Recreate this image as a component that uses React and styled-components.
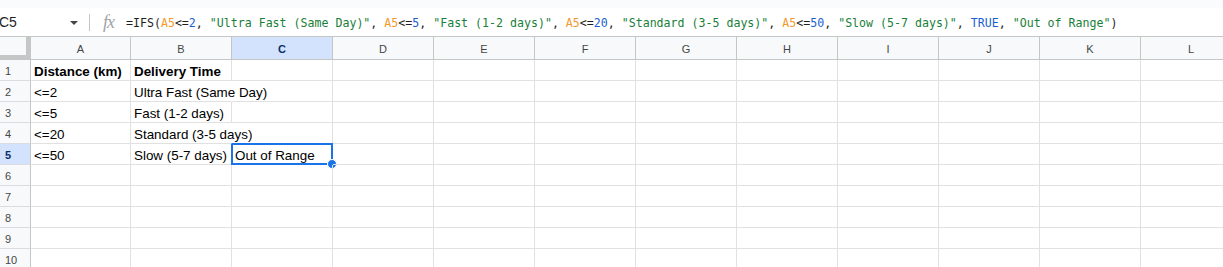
import React from 'react';
import styled, { createGlobalStyle } from 'styled-components';

const GlobalStyle = createGlobalStyle`
  html, body {
    margin: 0;
    padding: 0;
    background: #ffffff;
  }
  body {
    font-family: 'Liberation Sans', Arial, sans-serif;
  }
`

// top of the page
const Page = styled.div`
  width: 1223px;
  height: 267px;
  overflow: hidden;
  background: #ffffff;
`

const TopStrip = styled.div`
  height: 8px;
  background: #f9fbfd;
`

// formula bar
const FormulaBar = styled.div`
  height: 28px;
  border-bottom: 1px solid #c4c7c5;
  display: flex;
  align-items: center;
  background: #ffffff;
`

const NameBox = styled.div`
  width: 90px;
  height: 100%;
  display: flex;
  align-items: center;
  box-sizing: border-box;
  padding-right: 11px;
  font-size: 14px;
  color: #1f1f1f;
  margin-left: -1px;
`

const NameText = styled.span`
  flex-grow: 1;
`

const Caret = styled.span`
  width: 0;
  height: 0;
  border-left: 4px solid transparent;
  border-right: 4px solid transparent;
  border-top: 4px solid #444746;
  margin-top: 1px;
`

const Divider = styled.div`
  width: 1px;
  height: 17px;
  background: #c4c7c5;
`

const Fx = styled.span`
  font-family: 'Liberation Serif', 'Times New Roman', serif;
  font-style: italic;
  font-size: 18px;
  color: #a0a4a8;
  margin-left: 13px;
  width: 23px;
  letter-spacing: -1px;
`

const FormulaText = styled.div`
  font-family: 'DejaVu Sans Mono', 'Liberation Mono', monospace;
  font-size: 11.6px;
  color: #1f1f1f;
  white-space: pre;
  margin-top: 1px;
`

const tokenColors = {
  ref: '#f29a2e',
  num: '#1a5fd0',
  str: '#188038',
  txt: '#1f1f1f'
}

const Token = styled.span`
  color: ${(p) => tokenColors[p.kind]};
`

// grid
const Grid = styled.div`
  display: grid;
  grid-template-columns: 31px 100px repeat(11, 101px);
`

const Corner = styled.div`
  height: 23px;
  box-sizing: border-box;
  background: #f8f9fa;
  border-right: 5px solid #c4c7c5;
  border-bottom: 5px solid #c4c7c5;
`

const ColHeader = styled.div`
  height: 23px;
  box-sizing: border-box;
  border-right: 1px solid #c4c7c5;
  border-bottom: 1px solid #c4c7c5;
  background: ${(p) => (p.active ? '#d3e3fd' : '#f8f9fa')};
  color: ${(p) => (p.active ? '#0b2f6b' : '#444746')};
  font-weight: ${(p) => (p.active ? 700 : 400)};
  font-size: 11px;
  display: flex;
  align-items: center;
  justify-content: center;
  padding-top: 1px;
`

const RowHeader = styled.div`
  height: 21px;
  box-sizing: border-box;
  border-right: 1px solid #c4c7c5;
  border-bottom: 1px solid #dadce0;
  background: ${(p) => (p.active ? '#d3e3fd' : '#f8f9fa')};
  color: ${(p) => (p.active ? '#0b2f6b' : '#444746')};
  font-weight: ${(p) => (p.active ? 700 : 400)};
  font-size: 11px;
  padding-left: 5px;
  padding-top: 2px;
  display: flex;
  align-items: center;
`

const Cell = styled.div`
  position: relative;
  height: 21px;
  box-sizing: border-box;
  border-right: 1px solid ${(p) => (p.overflow ? 'transparent' : '#e1e1e1')};
  border-bottom: 1px solid #e1e1e1;
  padding: 0 3px;
  font-size: 13.4px;
  line-height: 23px;
  color: #000000;
  font-weight: ${(p) => (p.bold ? 700 : 400)};
  white-space: nowrap;
  overflow: visible;
  z-index: ${(p) => (p.overflow ? 1 : 0)};
`

// blue box around the selected cell
const Selection = styled.div`
  position: absolute;
  top: -1px;
  left: -1px;
  right: -1px;
  bottom: -1px;
  border: 2px solid #1a73e8;
  pointer-events: none;
`

const FillHandle = styled.div`
  position: absolute;
  right: -6px;
  bottom: -6px;
  width: 8px;
  height: 8px;
  border-radius: 50%;
  background: #1a73e8;
  border: 1px solid #ffffff;
`

const formula = [
  ['=IFS(', 'txt'], ['A5', 'ref'], ['<=', 'txt'], ['2', 'num'], [', ', 'txt'],
  ['"Ultra Fast (Same Day)"', 'str'], [', ', 'txt'],
  ['A5', 'ref'], ['<=', 'txt'], ['5', 'num'], [', ', 'txt'],
  ['"Fast (1-2 days)"', 'str'], [', ', 'txt'],
  ['A5', 'ref'], ['<=', 'txt'], ['20', 'num'], [', ', 'txt'],
  ['"Standard (3-5 days)"', 'str'], [', ', 'txt'],
  ['A5', 'ref'], ['<=', 'txt'], ['50', 'num'], [', ', 'txt'],
  ['"Slow (5-7 days)"', 'str'], [', ', 'txt'],
  ['TRUE', 'num'], [', ', 'txt'],
  ['"Out of Range"', 'str'], [')', 'txt']
]

const columns = ['A', 'B', 'C', 'D', 'E', 'F', 'G', 'H', 'I', 'J', 'K', 'L']

// cell contents: [A, B, C]
const data = [
  ['Distance (km)', 'Delivery Time', ''],
  ['<=2', 'Ultra Fast (Same Day)', ''],
  ['<=5', 'Fast (1-2 days)', ''],
  ['<=20', 'Standard (3-5 days)', ''],
  ['<=50', 'Slow (5-7 days)', 'Out of Range']
]

const overflowing = { '2-1': true, '4-1': true }

function App() {
  const rows = []
  for (let r = 1; r <= 10; r++) {
    const values = data[r - 1] || []
    rows.push(
      <RowHeader key={'h' + r} active={r === 5}>{r}</RowHeader>
    )
    columns.forEach((col, c) => {
      const selected = r === 5 && c === 2
      rows.push(
        <Cell
          key={col + r}
          bold={r === 1}
          overflow={overflowing[r + '-' + c]}
        >
          {values[c] || ''}
          {selected && (
            <Selection>
              <FillHandle />
            </Selection>
          )}
        </Cell>
      )
    })
  }

  return (
    <Page>
      <GlobalStyle />
      <TopStrip />
      <FormulaBar>
        <NameBox>
          <NameText>C5</NameText>
          <Caret />
        </NameBox>
        <Divider />
        <Fx>fx</Fx>
        <FormulaText>
          {formula.map(([text, kind], i) => (
            <Token key={i} kind={kind}>{text}</Token>
          ))}
        </FormulaText>
      </FormulaBar>
      <Grid>
        <Corner />
        {columns.map((col) => (
          <ColHeader key={col} active={col === 'C'}>{col}</ColHeader>
        ))}
        {rows}
      </Grid>
    </Page>
  )
}

export default App
